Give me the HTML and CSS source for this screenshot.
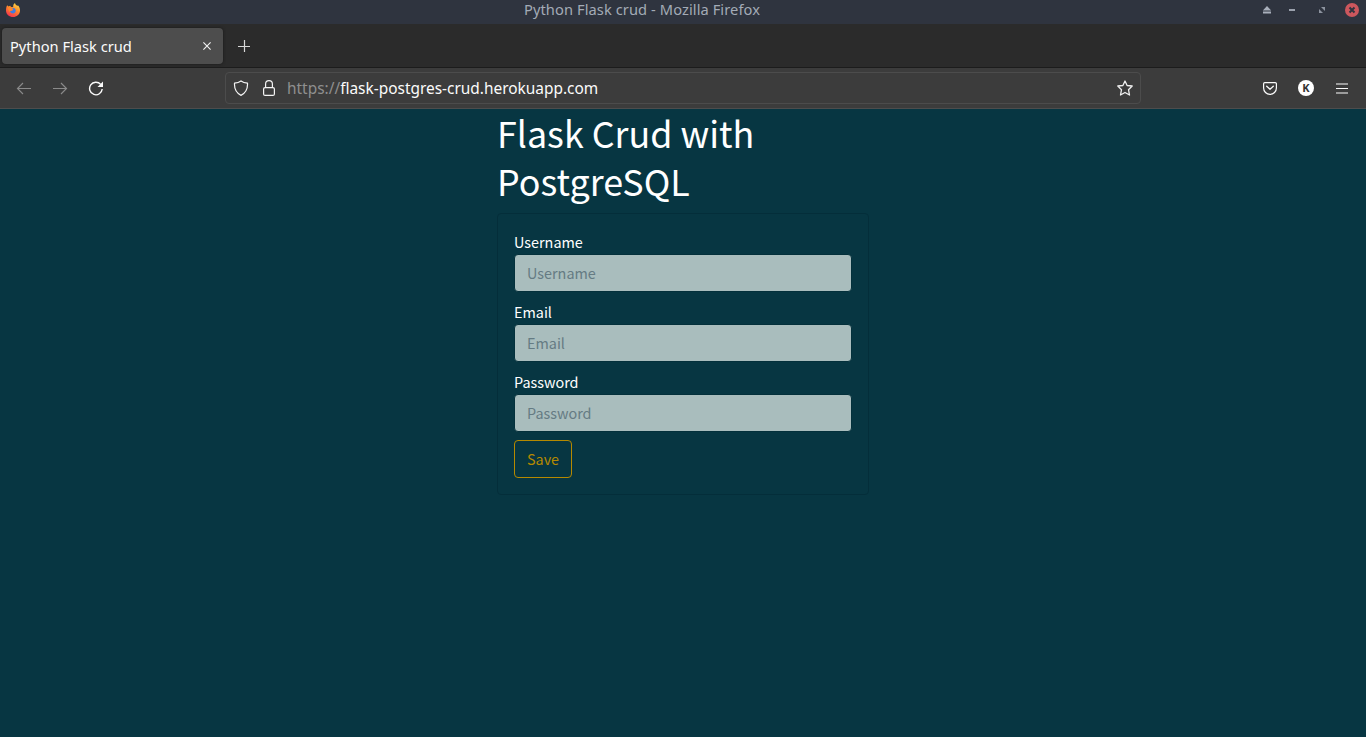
FILE: index.html
```
<!DOCTYPE html>
<html lang="en">
<head>
<meta charset="utf-8">
<title>Python Flask crud</title>
<link rel="stylesheet" href="styles.css">
</head>
<body>
<header class="titlebar">
  <svg class="firefox" viewBox="0 0 16 16" width="16" height="16">
    <defs>
      <linearGradient id="flame" x1="0.8" y1="0" x2="0.3" y2="1"><stop offset="0" stop-color="#ffe24a"/><stop offset=".45" stop-color="#ff8a2a"/><stop offset="1" stop-color="#f5304f"/></linearGradient>
    </defs>
    <path d="M2.2 3.2 3.4 4.6 5.2 3.7 6 5 8.2 5.1C8 3 8.7 1.7 10 1c.2 1.600 1.300 2 2.300 3l.6-.7C14.500 5 15.200 7 15 9c-.3 3.600-3.300 6-6.900 6C4.200 15 1 12.200 1 8.400c0-2 .4-3.800 1.200-5.200z" fill="url(#flame)"/>
    <path d="M5.200 6.300c1-.8 2-.7 3-.4 1.800.1 2.700 1.400 2.500 3.100-.2 1.500-1.300 2.400-2.800 2.400-1.600 0-2.600-.9-2.900-2.200l2.500-.7 1-1z" fill="#3f7be0"/>
    <path d="M3 4.800 5.400 5l1.200 1.200 1.800.3-1.400 1.400-1.600.8-.5 1.200C3.500 8.500 2.700 6.600 3 4.800z" fill="#ff872b"/>
  </svg>
  <span class="window-title">Python Flask crud - Mozilla Firefox</span>
  <div class="window-controls">
    <svg viewBox="0 0 10 8" width="10" height="8"><path d="M5 0 9.200 4.500H.8zM1 5.500h8v2H1z" fill="#a9afbb"/></svg>
    <svg viewBox="0 0 6 2" width="6" height="2"><path d="M0 0h6v2H0z" fill="#9ba1ad"/></svg>
    <svg viewBox="0 0 6 6" width="6" height="6"><path d="M2 0h4v4zM0 2v4h4z" fill="#8d939f"/></svg>
    <svg viewBox="0 0 14 14" width="14" height="14"><circle cx="7" cy="7" r="7" fill="#cc575d"/><path d="m4.500 4.500 5 5m0-5-5 5" stroke="#2f343f" stroke-width="2"/></svg>
  </div>
</header>
<nav class="tabstrip">
  <div class="tab">
    <span>Python Flask crud</span>
    <svg viewBox="0 0 8 8" width="8" height="8"><path d="m.4.4 7.200 7.200m0-7.200L.4 7.600" stroke="#f4f4f4" stroke-width="1.100" fill="none"/></svg>
  </div>
  <svg class="new-tab" viewBox="0 0 12 12" width="12" height="12"><path d="M6.500 0v12M0 6.500h12" stroke="#d8d8d8" stroke-width="1.200"/></svg>
</nav>
<div class="toolbar">
  <div class="nav-buttons">
    <svg viewBox="0 0 16 16" width="16" height="16"><path d="M15 8.500H1.700M7 3 1.500 8.500 7 14" stroke="#8a8a8a" stroke-width="1.150" fill="none"/></svg>
    <svg viewBox="0 0 16 16" width="16" height="16"><path d="M1 8.500h13.300M9 3l5.500 5.500L9 14" stroke="#8a8a8a" stroke-width="1.150" fill="none"/></svg>
    <svg viewBox="0 0 16 16" width="16" height="16"><path d="M14.200 9A6.300 6.300 0 1 1 12.700 4.400" stroke="#fbfbfb" stroke-width="1.400" fill="none"/><path d="M15 1.500V7H9.500z" fill="#fbfbfb"/></svg>
  </div>
  <div class="urlbar">
    <svg viewBox="0 0 16 16" width="16" height="16"><path d="M8 .9c1.800 1.300 4 2 6.500 2.300.3 5.200-1.700 9.700-6.500 12.200C3.200 12.900 1.200 8.400 1.500 3.200 4 2.900 6.200 2.200 8 .9z" stroke="#f4f4f4" stroke-width="1.200" stroke-linejoin="round" fill="none"/></svg>
    <svg viewBox="0 0 16 16" width="16" height="16"><rect x="2.600" y="7.600" width="10.800" height="7.800" rx="1.500" stroke="#f4f4f4" stroke-width="1.200" fill="none"/><path d="M4.600 7.500V4a3.400 3.400 0 0 1 6.800 0v3.500" stroke="#f4f4f4" stroke-width="1.200" fill="none"/></svg>
    <span class="url"><span class="scheme">https://</span>flask-postgres-crud.herokuapp.com</span>
    <svg class="star" viewBox="0 0 16 16" width="16" height="16"><path d="m8 1 2.100 4.500 5.100.5-3.700 3.700 1 5.300L8 12.500 3.500 15l1-5.300L.8 6l5.100-.5z" stroke="#f0f0f0" stroke-width="1.300" stroke-linejoin="round" fill="none"/></svg>
  </div>
  <div class="tools">
    <svg viewBox="0 0 16 16" width="16" height="16"><path d="M2.800 2.600h10.400a1.200 1.200 0 0 1 1.200 1.200V8A6.400 6.400 0 0 1 1.600 8V3.800a1.200 1.200 0 0 1 1.200-1.200z" stroke="#fbfbfb" stroke-width="1.200" fill="none"/><path d="M4.700 6.200 8 9.300l3.300-3.100" stroke="#fbfbfb" stroke-width="1.300" stroke-linecap="round" stroke-linejoin="round" fill="none"/></svg>
    <span class="account">K</span>
    <svg class="menu" viewBox="0 0 12 11" width="12" height="11"><path d="M0 1h12M0 5.500h12M0 10h12" stroke="#fbfbfb" stroke-width="1.200"/></svg>
  </div>
</div>
<main class="page">
  <div class="column">
    <h1>Flask Crud with PostgreSQL</h1>
    <form class="card">
      <label for="username">Username</label>
      <input id="username" type="text" placeholder="Username">
      <label for="email">Email</label>
      <input id="email" type="text" placeholder="Email">
      <label for="password">Password</label>
      <input id="password" type="password" placeholder="Password">
      <button type="button">Save</button>
    </form>
  </div>
</main>
</body>
</html>
```
FILE: styles.css
```
* { box-sizing: border-box; }
body { margin: 0; height: 737px; display: flex; flex-direction: column; overflow: hidden; background: #073642; font-family: "Noto Sans", sans-serif; }
svg { display: block; flex: none; }
.titlebar { height: 24px; flex: none; display: grid; grid-template-columns: 1fr auto 1fr; align-items: center; background: #2f343f; padding: 0 7px 4px 5px; }
.window-title { font-size: 14.67px; letter-spacing: 0.08px; line-height: 20px; color: #a3abb6; white-space: nowrap; margin: -2px 80px 0 0; }
.window-controls { display: flex; align-items: center; justify-content: flex-end; }
.window-controls svg:nth-child(2) { margin-left: 17px; }
.window-controls svg:nth-child(3) { margin-left: 24px; }
.window-controls svg:nth-child(4) { margin-left: 20px; }
.tabstrip { height: 44px; flex: none; display: flex; align-items: center; background: #2b2b2b; border-bottom: 1px solid #1c1c1c; padding: 0 2px; }
.tab { width: 221px; height: 36px; display: flex; align-items: center; justify-content: space-between; padding: 0 12px 0 8px; border-radius: 4px; background: #4d4d4d; box-shadow: 0 0 3px #171717; color: #fbfbfb; font-size: 14.67px; }
.new-tab { margin: 1px 0 0 15px; }
.toolbar { height: 41px; flex: none; display: flex; align-items: center; background: #3c3c3c; border-bottom: 1px solid #4d4d4d; padding: 0 18px 0 16px; }
.nav-buttons { width: 209px; display: flex; gap: 20px; }
.urlbar { width: 916px; height: 32px; display: flex; align-items: center; gap: 12px; padding: 0 7px; border: 1px solid #4c4c4c; border-radius: 4px; }
.url { font-size: 15.43px; color: #fbfbfb; margin-left: -2px; }
.scheme { color: #8f8f8f; }
.star { margin-left: auto; }
.tools { margin-left: auto; display: flex; align-items: center; gap: 20px; }
.menu { margin-left: 2px; }
.account { width: 16px; height: 16px; border-radius: 50%; display: flex; align-items: center; justify-content: center; background: #fff; color: #333; font-weight: 700; font-size: 11px; line-height: 16px; }
.page { flex: 1; display: flex; justify-content: center; color: #fff; font-family: "Noto Sans CJK JP", sans-serif; }
.column { width: 372px; margin-top: -1px; }
h1 { margin: 0 0 9px; font-size: 35.85px; line-height: 48px; font-weight: 400; }
.card { display: flex; flex-direction: column; border: 1px solid #042e3a; border-radius: 4px; padding: 16px; }
label { font-size: 14.4px; line-height: 24px; }
input { height: 38px; margin-bottom: 8px; padding: 0 12px 2px; border: 1px solid #04303b; border-radius: 4px; background: #a9bdbd; font: 14.4px/24px "Noto Sans CJK JP", sans-serif; }
input::placeholder { color: #657b83; opacity: 1; }
button { align-self: flex-start; width: 58px; height: 38px; padding: 0; border: 1px solid #b58900; border-radius: 4px; background: transparent; color: #b58900; font: 14.4px/24px "Noto Sans CJK JP", sans-serif; }
```
